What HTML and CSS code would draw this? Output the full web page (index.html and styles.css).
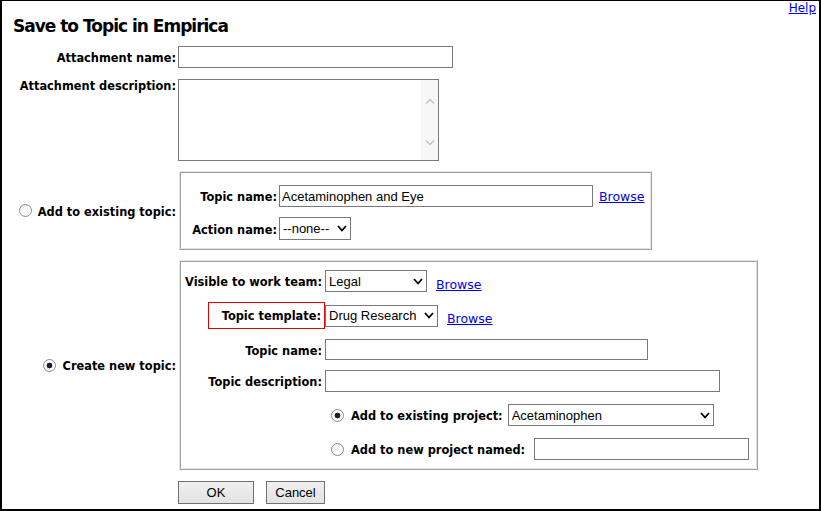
FILE: index.html
```html
<!DOCTYPE html>
<html lang="en">
<head>
    <meta charset="UTF-8">
    <title>Save to Topic in Empirica</title>
    <link rel="stylesheet" href="styles.css">
</head>
<body>
<div class="page">
    <div class="help"><a href="#">Help</a></div>
    <h1 class="title">Save to Topic in Empirica</h1>

    <form class="form">
        <label class="lbl" for="attName">Attachment name:</label>
        <input class="text w-att" type="text" id="attName">

        <label class="lbl lbl-top" for="attDesc">Attachment description:</label>
        <div class="textarea">
            <textarea id="attDesc"></textarea>
            <div class="scroll">
                <svg width="10" height="6" viewBox="0 0 10 6"><path d="M1 5.5 L5 1.5 L9 5.5" fill="none" stroke="#c2c2c2" stroke-width="1.4"/></svg>
                <svg width="10" height="6" viewBox="0 0 10 6"><path d="M1 0.5 L5 4.5 L9 0.5" fill="none" stroke="#c2c2c2" stroke-width="1.4"/></svg>
            </div>
        </div>

        <label class="lbl radio-lbl radio-existing"><input type="radio" name="mode">Add to existing topic:</label>
        <div class="box box-existing">
            <div class="box-inner grid-existing">
                <label class="lbl" for="topicName">Topic name:</label>
                <div class="ctl">
                    <input class="text w-topic" type="text" id="topicName" value="Acetaminophen and Eye">
                    <a href="#" class="browse">Browse</a>
                </div>
                <label class="lbl">Action name:</label>
                <div class="ctl">
                    <div class="select w-action">
                        <select><option>--none--</option></select>
                        <svg width="10" height="7" viewBox="0 0 10 7"><path d="M1 1 L5 5.5 L9 1" fill="none" stroke="#000" stroke-width="1.8"/></svg>
                    </div>
                </div>
            </div>
        </div>

        <label class="lbl radio-lbl radio-new"><input type="radio" name="mode" checked>Create new topic:</label>
        <div class="box box-new">
            <div class="box-inner grid-new">
                <label class="lbl">Visible to work team:</label>
                <div class="ctl">
                    <div class="select w-team">
                        <select><option>Legal</option></select>
                        <svg width="10" height="7" viewBox="0 0 10 7"><path d="M1 1 L5 5.5 L9 1" fill="none" stroke="#000" stroke-width="1.8"/></svg>
                    </div>
                    <a href="#" class="browse browse-low">Browse</a>
                </div>

                <div class="lbl-cell"><label class="lbl marked">Topic template:</label></div>
                <div class="ctl">
                    <div class="select w-template">
                        <select><option>Drug Research</option></select>
                        <svg width="10" height="7" viewBox="0 0 10 7"><path d="M1 1 L5 5.5 L9 1" fill="none" stroke="#000" stroke-width="1.8"/></svg>
                    </div>
                    <a href="#" class="browse browse-low">Browse</a>
                </div>

                <label class="lbl" for="newName">Topic name:</label>
                <div class="ctl"><input class="text w-newname" type="text" id="newName"></div>

                <label class="lbl" for="newDesc">Topic description:</label>
                <div class="ctl"><input class="text w-newdesc" type="text" id="newDesc"></div>

                <div class="project-row">
                    <label class="lbl radio-lbl"><input type="radio" name="project" checked>Add to existing project:</label>
                    <div class="select w-project">
                        <select><option>Acetaminophen</option></select>
                        <svg width="10" height="7" viewBox="0 0 10 7"><path d="M1 1 L5 5.5 L9 1" fill="none" stroke="#000" stroke-width="1.8"/></svg>
                    </div>
                </div>
                <div class="project-row">
                    <label class="lbl radio-lbl"><input type="radio" name="project">Add to new project named:</label>
                    <input class="text w-newproject" type="text">
                </div>
            </div>
        </div>

        <div class="buttons">
            <button type="button" class="btn btn-ok">OK</button>
            <button type="button" class="btn btn-cancel">Cancel</button>
        </div>
    </form>
</div>
</body>
</html>
```

FILE: styles.css
```css
body {
    margin: 0;
    background: #fff;
}
.page {
    width: 821px;
    height: 511px;
    box-sizing: border-box;
    border: 2px solid #000;
    border-top-width: 1px;
    overflow: hidden;
}
.help {
    text-align: right;
    padding-right: 3px;
    height: 15px;
    font-family: "DejaVu Sans", Verdana, sans-serif;
    font-size: 12px;
    line-height: 15px;
}
a {
    color: #0000ee;
}
.title {
    margin: 0 0 0 11px;
    font-family: "DejaVu Sans", Verdana, sans-serif;
    font-size: 17px;
    letter-spacing: -1px;
    line-height: 20px;
    font-weight: bold;
    color: #000;
}
.form {
    display: grid;
    grid-template-columns: 174px auto;
    column-gap: 2px;
    row-gap: 10px;
    margin-top: 10px;
    align-items: center;
}
.lbl {
    font-family: "DejaVu Sans", Verdana, sans-serif;
    font-size: 11.4px;
    font-weight: bold;
    color: #000;
    text-align: right;
    white-space: nowrap;
    padding-top: 2px;
}
.lbl-top {
    align-self: start;
    padding-top: 1px;
}
.text {
    box-sizing: border-box;
    height: 22px;
    border: 1px solid #7a7a7a;
    padding: 0 2px;
    margin: 0;
    font-family: "Liberation Sans", Arial, sans-serif;
    font-size: 13px;
    color: #000;
    background: #fff;
}
.w-att { width: 275px; }
.w-topic { width: 314px; }
.w-newname { width: 323px; height: 21px; }
.w-newdesc { width: 395px; }
.w-newproject { width: 215px; margin-left: 9px; }

.textarea {
    display: flex;
    width: 261px;
    height: 82px;
    box-sizing: border-box;
    border: 1px solid #7a7a7a;
    margin-top: 1px;
    background: #fff;
}
.textarea textarea {
    flex: 1;
    border: 0;
    resize: none;
    outline: none;
    margin: 0;
    padding: 2px;
    font-family: "Liberation Sans", Arial, sans-serif;
    font-size: 13px;
}
.scroll {
    width: 17px;
    background: #f7f7f7;
    display: flex;
    flex-direction: column;
    align-items: center;
    justify-content: space-between;
    padding: 18px 0 14px;
    box-sizing: border-box;
}
.scroll svg { display: block; }

.radio-lbl {
    display: flex;
    align-items: center;
    justify-content: flex-end;
}
.radio-lbl input {
    appearance: none;
    -webkit-appearance: none;
    width: 13px;
    height: 13px;
    margin: -2px 7px 0 0;
    border: 1px solid #8c8c8c;
    border-radius: 50%;
    background: linear-gradient(#f2f2f2, #fff);
    box-sizing: border-box;
    flex: none;
}
.radio-lbl input:checked {
    background: radial-gradient(circle, #202020 0, #202020 2.6px, #fff 3.2px);
}
.radio-existing input { margin-right: 6px; }

.box {
    box-sizing: border-box;
    margin-left: 1px;
    border: 1px solid;
    border-color: #e3e3e3 #a0a0a0 #a0a0a0 #e3e3e3;
    justify-self: start;
}
.box-inner {
    border: 1px solid;
    border-color: #a0a0a0 #e3e3e3 #e3e3e3 #a0a0a0;
    display: grid;
    align-items: center;
}
.box-existing { width: 473px; }
.box-new { width: 579px; }

.grid-existing {
    grid-template-columns: 98px auto;
    row-gap: 10px;
    padding: 12px 0 8px;
}
.grid-existing .lbl { padding-right: 2px; }

.grid-new {
    grid-template-columns: 144px auto;
    row-gap: 10px;
    padding: 8px 0 8px;
}
.grid-new > .lbl { padding-right: 3px; }
.lbl-cell {
    display: flex;
    justify-content: flex-end;
}
.marked {
    border: 1px solid #e00000;
    padding: 1px 3px 0 13px;
    height: 27px;
    line-height: 25px;
    box-sizing: border-box;
}

.ctl {
    display: flex;
    align-items: center;
}
.browse {
    font-family: "DejaVu Sans", Verdana, sans-serif;
    font-size: 12.5px;
    margin-left: 6px;
}
.browse-low {
    margin-left: 9px;
    padding-top: 6px;
}

.select {
    display: flex;
    align-items: center;
    box-sizing: border-box;
    height: 22px;
    border: 1px solid #7a7a7a;
    background: #fff;
    padding-right: 3px;
}
.select select {
    appearance: none;
    -webkit-appearance: none;
    flex: 1;
    min-width: 0;
    border: 0;
    outline: none;
    background: transparent;
    padding: 0 0 0 3px;
    margin: 0;
    font-family: "Liberation Sans", Arial, sans-serif;
    font-size: 13px;
    color: #000;
}
.select svg { display: block; flex: none; }
.w-action { width: 72px; height: 23px; }
.w-team { width: 102px; }
.w-template { width: 113px; }
.w-project { width: 206px; margin-left: 5px; }

.project-row {
    grid-column: 2;
    display: flex;
    align-items: center;
    padding-left: 6px;
    margin-top: 2px;
}
.project-row .radio-lbl input { margin-right: 7px; }

.buttons {
    grid-column: 2;
    display: flex;
    gap: 12px;
    margin-top: 1px;
}
.btn {
    height: 23px;
    box-sizing: border-box;
    border: 1px solid #707070;
    border-radius: 0;
    background: linear-gradient(#f0f0f0, #e2e2e2);
    font-family: "Liberation Sans", Arial, sans-serif;
    font-size: 13px;
    color: #000;
    padding: 0;
}
.btn-ok { width: 76px; }
.btn-cancel { width: 59px; }
```
